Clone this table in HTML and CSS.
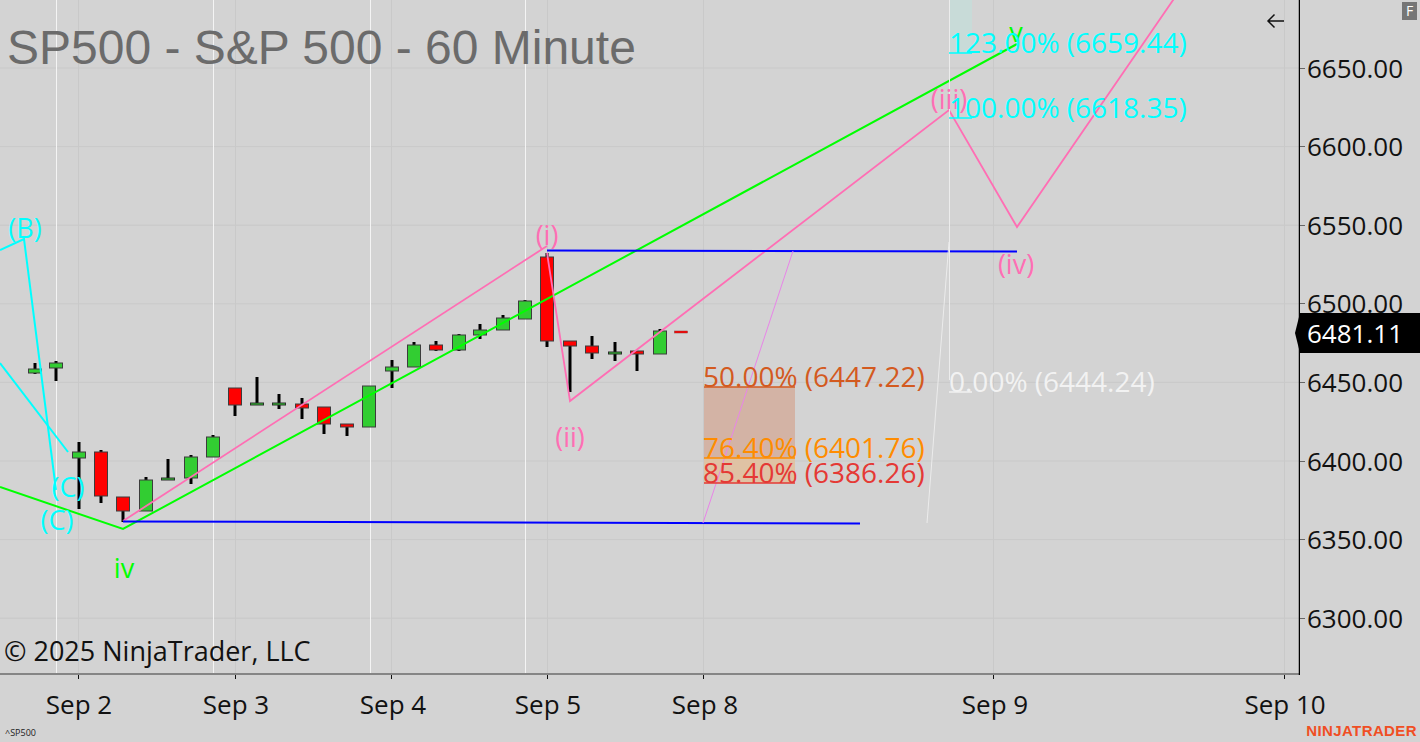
FILE: index.html
```html
<!DOCTYPE html>
<html lang="en">
<head>
<meta charset="utf-8">
<title>SP500 - S&amp;P 500 - 60 Minute</title>
<link rel="stylesheet" href="styles.css">
</head>
<body>
<div class="chart">
  <div class="plot">
    <svg class="plot-svg" width="1300" height="675" viewBox="0 0 1300 675">
      <g class="grid">
        <line x1="0" y1="68" x2="1299" y2="68"/>
        <line x1="0" y1="146.6" x2="1299" y2="146.6"/>
        <line x1="0" y1="225.2" x2="1299" y2="225.2"/>
        <line x1="0" y1="303.8" x2="1299" y2="303.8"/>
        <line x1="0" y1="382.4" x2="1299" y2="382.4"/>
        <line x1="0" y1="461" x2="1299" y2="461"/>
        <line x1="0" y1="539.6" x2="1299" y2="539.6"/>
        <line x1="0" y1="618.2" x2="1299" y2="618.2"/>
        <line x1="78.5" y1="0" x2="78.5" y2="673"/>
        <line x1="235.5" y1="0" x2="235.5" y2="673"/>
        <line x1="391.5" y1="0" x2="391.5" y2="673"/>
        <line x1="547.5" y1="0" x2="547.5" y2="673"/>
        <line x1="703.5" y1="0" x2="703.5" y2="673"/>
        <line x1="993.5" y1="0" x2="993.5" y2="673"/>
        <line x1="1284.5" y1="0" x2="1284.5" y2="673"/>
      </g>
      <g class="sessions">
        <line x1="56.5" y1="0" x2="56.5" y2="673"/>
        <line x1="213.5" y1="0" x2="213.5" y2="673"/>
        <line x1="370.5" y1="0" x2="370.5" y2="673"/>
        <line x1="525.5" y1="0" x2="525.5" y2="673"/>
      </g>

      <text class="title" x="7" y="64">SP500 - S&amp;P 500 - 60 Minute</text>

      <!-- fib extension column -->
      <rect class="ext-shade" x="949" y="0" width="23" height="53"/>
      <!-- fib retracement zone -->
      <rect class="retr-a" x="704" y="387" width="91" height="71"/>
      <rect class="retr-b" x="704" y="458" width="91" height="25"/>

      <g class="candles">
        <line class="wick" x1="35" y1="363" x2="35" y2="374"/><rect class="up" x="28.5" y="369" width="13" height="4"/>
        <line class="wick" x1="56" y1="361" x2="56" y2="381"/><rect class="up" x="49.5" y="363" width="13" height="5"/>
        <line class="wick" x1="79" y1="442" x2="79" y2="509"/><rect class="up" x="72.5" y="452" width="13" height="6"/>
        <line class="wick" x1="101" y1="450" x2="101" y2="503"/><rect class="dn" x="94.5" y="452" width="13" height="44"/>
        <line class="wick" x1="123" y1="497" x2="123" y2="522"/><rect class="dn" x="116.5" y="497" width="13" height="14"/>
        <line class="wick" x1="146" y1="477" x2="146" y2="511"/><rect class="up" x="139.5" y="480" width="13" height="31"/>
        <line class="wick" x1="168" y1="459" x2="168" y2="480"/><rect class="doji" x="161.5" y="478" width="13" height="2"/>
        <line class="wick" x1="191" y1="455" x2="191" y2="484"/><rect class="up" x="184.5" y="457" width="13" height="21"/>
        <line class="wick" x1="213" y1="435" x2="213" y2="457"/><rect class="up" x="206.5" y="437" width="13" height="20"/>
        <line class="wick" x1="235" y1="388" x2="235" y2="416"/><rect class="dn" x="228.5" y="388" width="13" height="17"/>
        <line class="wick" x1="257" y1="377" x2="257" y2="405"/><rect class="doji" x="250.5" y="403" width="13" height="2"/>
        <line class="wick" x1="279" y1="394" x2="279" y2="409"/><rect class="doji" x="272.5" y="403" width="13" height="2"/>
        <line class="wick" x1="302" y1="398" x2="302" y2="419"/><rect class="dn" x="295.5" y="404" width="13" height="4"/>
        <line class="wick" x1="324" y1="407" x2="324" y2="434"/><rect class="dn" x="317.5" y="407" width="13" height="17"/>
        <line class="wick" x1="347" y1="424" x2="347" y2="436"/><rect class="dn" x="340.5" y="424" width="13" height="3"/>
        <line class="wick" x1="369" y1="386" x2="369" y2="427"/><rect class="up" x="362.5" y="386" width="13" height="41"/>
        <line class="wick" x1="392" y1="360" x2="392" y2="388"/><rect class="up" x="385.5" y="367" width="13" height="4"/>
        <line class="wick" x1="414" y1="342" x2="414" y2="367"/><rect class="up" x="407.5" y="345" width="13" height="22"/>
        <line class="wick" x1="436" y1="341" x2="436" y2="351"/><rect class="dn" x="429.5" y="345" width="13" height="5"/>
        <line class="wick" x1="459" y1="334" x2="459" y2="351"/><rect class="up" x="452.5" y="335" width="13" height="15"/>
        <line class="wick" x1="480" y1="324" x2="480" y2="339"/><rect class="up" x="473.5" y="330" width="13" height="5"/>
        <line class="wick" x1="503" y1="315" x2="503" y2="330"/><rect class="up" x="496.5" y="318" width="13" height="12"/>
        <line class="wick" x1="525" y1="300" x2="525" y2="319"/><rect class="up" x="518.5" y="301" width="13" height="18"/>
        <line class="wick" x1="547" y1="253" x2="547" y2="347"/><rect class="dn" x="540.5" y="257" width="13" height="84"/>
        <line class="wick" x1="570" y1="341" x2="570" y2="392"/><rect class="dn" x="563.5" y="341" width="13" height="5"/>
        <line class="wick" x1="592" y1="336" x2="592" y2="359"/><rect class="dn" x="585.5" y="346" width="13" height="7"/>
        <line class="wick" x1="615" y1="342" x2="615" y2="361"/><rect class="doji" x="608.5" y="352" width="13" height="2"/>
        <line class="wick" x1="637" y1="351" x2="637" y2="371"/><rect class="dn" x="630.5" y="351" width="13" height="3"/>
        <line class="wick" x1="660" y1="329" x2="660" y2="354"/><rect class="up" x="653.5" y="331" width="13" height="23"/>
        <rect class="last" x="674.5" y="331" width="13" height="2"/>
      </g>

      <g class="drawings">
        <polyline class="cyan" points="0,250 24,239 56,490"/>
        <line class="cyan" x1="0" y1="363" x2="68" y2="452"/>
        <polyline class="lime" points="0,487 123,529 1017,44"/>
        <line class="pink" x1="123" y1="521" x2="547" y2="246"/>
        <polyline class="pink" points="547,253 570,401 949,110 1017,227 1180,-10"/>
        <line class="blue" x1="547" y1="250.5" x2="1017" y2="251.5"/>
        <line class="blue" x1="123" y1="521.5" x2="860" y2="523.5"/>
        <line class="violet" x1="703" y1="523" x2="793" y2="251"/>
        <line class="ghost" x1="927" y1="523" x2="949" y2="242"/>
        <line class="ghost" x1="949.5" y1="0" x2="949.5" y2="380"/>
        <line class="lv-50" x1="704" y1="387" x2="795" y2="387"/>
        <line class="lv-76" x1="704" y1="458" x2="795" y2="458"/>
        <line class="lv-85" x1="704" y1="483" x2="795" y2="483"/>
        <line class="lv-ext" x1="949" y1="53" x2="972" y2="53"/>
        <line class="lv-ext" x1="949" y1="118" x2="972" y2="118"/>
        <line class="lv-zero" x1="949" y1="392" x2="972" y2="392"/>
      </g>

      <g class="labels">
        <text class="lbl lbl-cyan" x="25" y="238">(B)</text>
        <text class="lbl lbl-cyan" x="68" y="497">(C)</text>
        <text class="lbl lbl-cyan" x="57" y="530">(C)</text>
        <text class="lbl lbl-lime" x="124" y="578">iv</text>
        <text class="lbl lbl-lime" x="1016" y="42">v</text>
        <text class="lbl lbl-pink" x="547" y="245">(i)</text>
        <text class="lbl lbl-pink" x="570" y="447">(ii)</text>
        <text class="lbl lbl-pink" x="949" y="109">(iii)</text>
        <text class="lbl lbl-pink" x="1016" y="274">(iv)</text>

        <text class="fib t-50" x="703" y="387">50.00% (6447.22)</text>
        <text class="fib t-76" x="703" y="458">76.40% (6401.76)</text>
        <text class="fib t-85" x="703" y="483">85.40% (6386.26)</text>
        <text class="fib t-ext" x="949" y="53">123.00% (6659.44)</text>
        <text class="fib t-ext" x="949" y="118">100.00% (6618.35)</text>
        <text class="fib t-zero" x="949" y="392">0.00% (6444.24)</text>

        <text class="copyright" x="4" y="661">© 2025 NinjaTrader, LLC</text>
      </g>

      <path class="back-arrow" d="M1268 21 H1284 M1274.5 14.5 L1268 21 L1274.5 27.5"/>

      <g class="frame">
        <line class="x-line" x1="0" y1="674" x2="1300" y2="674"/>
        <line class="y-line" x1="1299.5" y1="0" x2="1299.5" y2="675"/>
      </g>
    </svg>
  </div>

  <div class="price-axis">
    <div class="price">6650.00</div>
    <div class="price">6600.00</div>
    <div class="price">6550.00</div>
    <div class="price">6500.00</div>
    <div class="price">6450.00</div>
    <div class="price">6400.00</div>
    <div class="price">6350.00</div>
    <div class="price">6300.00</div>
    <div class="last-price">6481.11</div>
    <div class="f-badge">F</div>
  </div>

  <div class="time-axis">
    <svg class="time-svg" width="1420" height="48" viewBox="0 0 1420 48">
      <g class="ticks">
        <line x1="78.5" y1="0" x2="78.5" y2="4"/>
        <line x1="235.5" y1="0" x2="235.5" y2="4"/>
        <line x1="391.5" y1="0" x2="391.5" y2="4"/>
        <line x1="547.5" y1="0" x2="547.5" y2="4"/>
        <line x1="703.5" y1="0" x2="703.5" y2="4"/>
        <line x1="993.5" y1="0" x2="993.5" y2="4"/>
        <line x1="1284.5" y1="0" x2="1284.5" y2="4"/>
      </g>
      <g class="dates">
        <text x="79" y="39">Sep 2</text>
        <text x="236" y="39">Sep 3</text>
        <text x="393" y="39">Sep 4</text>
        <text x="548" y="39">Sep 5</text>
        <text x="705" y="39">Sep 8</text>
        <text x="995" y="39">Sep 9</text>
        <text x="1285" y="39">Sep 10</text>
      </g>
    </svg>
    <div class="status">
      <span class="symbol">^SP500</span>
      <span class="logo">NINJATRADER</span>
    </div>
  </div>
</div>
</body>
</html>
```

FILE: styles.css
```css
* { box-sizing: border-box; margin: 0; padding: 0; }

html, body {
  width: 1420px;
  height: 742px;
  overflow: hidden;
  background: #d3d3d3;
}

body {
  font-family: "Open Sans", "Noto Sans", sans-serif;
  color: #111;
}

.chart {
  display: grid;
  grid-template-columns: 1300px 120px;
  grid-template-rows: 675px 67px;
  width: 1420px;
  height: 742px;
  background: #d3d3d3;
}

.plot { grid-column: 1; grid-row: 1; }
.plot-svg { display: block; overflow: hidden; }

/* grid */
.grid line { stroke: #c9c9c9; stroke-width: 1; }
.sessions line { stroke: #f4f4f4; stroke-width: 1; }

.title {
  font-family: "Liberation Sans", Arial, sans-serif;
  font-size: 48px;
  fill: #6b6b6b;
}

.ext-shade { fill: #c8dbd8; }
.retr-a { fill: #d3b3a5; }
.retr-b { fill: #dfc2a4; }

/* candles */
.wick { stroke: #000; stroke-width: 3; }
.up { fill: #32cd32; stroke: #3c3c3c; stroke-width: 1; }
.dn { fill: #ff0000; stroke: #3c3c3c; stroke-width: 1; }
.doji { fill: #32cd32; stroke: #2a2a2a; stroke-width: 1; }
.last { fill: #ff0000; stroke: #8a3a3a; stroke-width: 0.5; }

/* drawing tools */
.drawings line, .drawings polyline { fill: none; }
.cyan { stroke: #00ffff; stroke-width: 2; }
.lime { stroke: #00ff00; stroke-width: 2; }
.pink { stroke: #ff6eb4; stroke-width: 1.8; }
.blue { stroke: #0000ff; stroke-width: 2; }
.violet { stroke: #e884e8; stroke-width: 1; }
.ghost { stroke: #ececec; stroke-width: 1; }
.lv-50 { stroke: #d35a1f; stroke-width: 1.5; }
.lv-76 { stroke: #ff8c00; stroke-width: 1.5; }
.lv-85 { stroke: #e53935; stroke-width: 1.5; }
.lv-ext { stroke: #00ffff; stroke-width: 1.5; }
.lv-zero { stroke: #f2f2f2; stroke-width: 1.5; }

/* labels */
.lbl {
  font-family: "Open Sans", "Noto Sans", sans-serif;
  font-size: 27px;
  text-anchor: middle;
}
.lbl-cyan { fill: #00ffff; }
.lbl-lime { fill: #00ff00; }
.lbl-pink { fill: #ff6eb4; }

.fib {
  font-family: "Open Sans", "Noto Sans", sans-serif;
  font-size: 28px;
}
.t-50 { fill: #d35a1f; }
.t-76 { fill: #ff8c00; }
.t-85 { fill: #e53935; }
.t-ext { fill: #00ffff; }
.t-zero { fill: #f2f2f2; }

.copyright {
  font-family: "Open Sans", "Noto Sans", sans-serif;
  font-size: 27px;
  fill: #111;
}

.back-arrow { fill: none; stroke: #111; stroke-width: 1.5; }

.x-line { stroke: #858585; stroke-width: 2; }
.y-line { stroke: #000; stroke-width: 1.5; }

/* price axis */
.price-axis {
  grid-column: 2;
  grid-row: 1;
  position: relative;
  display: flex;
  flex-direction: column;
  padding-top: 28.6px;
}

.price {
  position: relative;
  height: 78.6px;
  line-height: 78.6px;
  font-size: 26px;
  padding-left: 7px;
  color: #111;
  white-space: nowrap;
}

.price::before {
  content: "";
  position: absolute;
  left: 0;
  top: 39px;
  width: 5px;
  height: 1px;
  background: #666;
}

.last-price {
  position: absolute;
  left: 0;
  top: 313px;
  width: 120px;
  height: 40px;
  line-height: 40px;
  background: #000;
  color: #fff;
  font-size: 26px;
  padding-left: 7px;
}

.last-price::before {
  content: "";
  position: absolute;
  left: -5px;
  top: 0;
  border-right: 5px solid #000;
  border-top: 20px solid transparent;
  border-bottom: 20px solid transparent;
}

.f-badge {
  position: absolute;
  top: 2px;
  right: 3px;
  width: 15px;
  height: 18px;
  background: #767676;
  color: #fff;
  font-size: 14px;
  line-height: 18px;
  text-align: center;
}

/* time axis */
.time-axis {
  grid-column: 1 / -1;
  grid-row: 2;
  display: flex;
  flex-direction: column;
}

.time-svg { display: block; }
.ticks line { stroke: #111; stroke-width: 1; }
.dates text {
  font-family: "Open Sans", "Noto Sans", sans-serif;
  font-size: 26px;
  fill: #111;
  text-anchor: middle;
}

.status {
  height: 19px;
  display: flex;
  justify-content: space-between;
  align-items: flex-end;
  padding: 0 3px 4px 5px;
}

.symbol {
  font-size: 9px;
  line-height: 10px;
  color: #222;
}

.logo {
  font-family: "Liberation Sans", Arial, sans-serif;
  font-weight: bold;
  font-size: 15px;
  line-height: 14px;
  letter-spacing: 0.4px;
  color: #f04e23;
}
```
